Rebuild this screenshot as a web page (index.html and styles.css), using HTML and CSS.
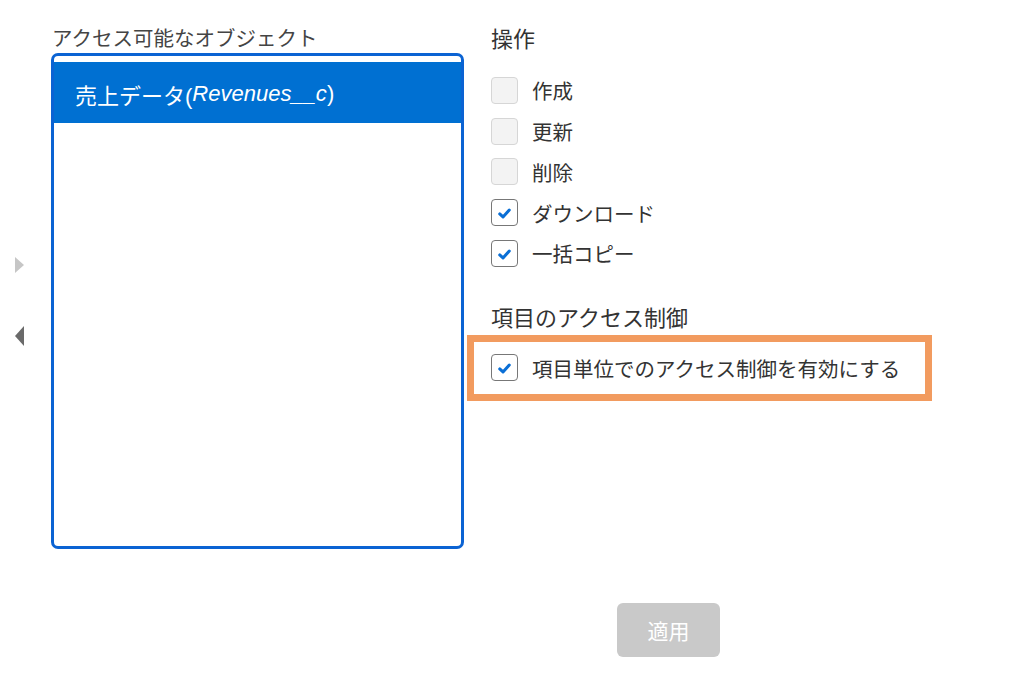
FILE: index.html
```html
<!DOCTYPE html>
<html lang="ja">
<head>
<meta charset="utf-8">
<link rel="stylesheet" href="styles.css">
</head>
<body>
<div class="page">
  <div class="main">
    <div class="left">
      <div class="list-label">アクセス可能なオブジェクト</div>
      <div class="arrows">
        <span class="arrow arrow-right"></span>
        <span class="arrow arrow-left"></span>
      </div>
      <div class="listbox">
        <div class="list-item selected">売上データ(<i>Revenues__c</i>)</div>
      </div>
    </div>
    <div class="right">
      <div class="heading">操作</div>
      <ul class="options">
        <li class="option"><span class="cb disabled"></span><span class="opt-label">作成</span></li>
        <li class="option"><span class="cb disabled"></span><span class="opt-label">更新</span></li>
        <li class="option"><span class="cb disabled"></span><span class="opt-label">削除</span></li>
        <li class="option"><span class="cb checked"><svg viewBox="0 0 12 10" width="13" height="11"><path d="M1.6 5.4 L4.6 8.2 L10.4 1.8" /></svg></span><span class="opt-label">ダウンロード</span></li>
        <li class="option"><span class="cb checked"><svg viewBox="0 0 12 10" width="13" height="11"><path d="M1.6 5.4 L4.6 8.2 L10.4 1.8" /></svg></span><span class="opt-label">一括コピー</span></li>
      </ul>
      <div class="heading heading-2">項目のアクセス制御</div>
      <div class="highlight">
        <div class="option"><span class="cb checked"><svg viewBox="0 0 12 10" width="13" height="11"><path d="M1.6 5.4 L4.6 8.2 L10.4 1.8" /></svg></span><span class="opt-label">項目単位でのアクセス制御を有効にする</span></div>
      </div>
    </div>
  </div>
  <div class="footer">
    <button class="apply" type="button">適用</button>
  </div>
</div>
</body>
</html>
```

FILE: styles.css
```css
html, body {
  margin: 0;
  padding: 0;
  background: #ffffff;
}

body {
  font-family: "Noto Sans CJK JP", "Noto Sans", sans-serif;
  color: #333333;
}

.page {
  display: flex;
  flex-direction: column;
  padding-top: 23px;
}

.main {
  display: flex;
  align-items: flex-start;
}

.left {
  display: grid;
  grid-template-columns: 51px 413px;
  grid-template-rows: auto auto;
}

.list-label {
  grid-column: 2;
  grid-row: 1;
  font-size: 20.5px;
  line-height: 28px;
  color: #444444;
  padding-left: 1px;
  margin-bottom: 2px;
}

.arrows {
  grid-column: 1;
  grid-row: 2;
  display: flex;
  flex-direction: column;
  justify-content: center;
  align-items: flex-start;
  padding-left: 15px;
  gap: 53px;
}

.arrow {
  display: block;
  width: 0;
  height: 0;
}

.arrow-right {
  border-top: 8.5px solid transparent;
  border-bottom: 8.5px solid transparent;
  border-left: 9px solid #c6c6c6;
}

.arrow-left {
  border-top: 10px solid transparent;
  border-bottom: 10px solid transparent;
  border-right: 9px solid #6a6a6a;
}

.listbox {
  grid-column: 2;
  grid-row: 2;
  box-sizing: border-box;
  height: 496px;
  border: 3px solid #0b63d3;
  border-radius: 7px;
  padding-top: 6px;
  background: #ffffff;
}

.list-item {
  height: 61px;
  display: flex;
  align-items: center;
  padding-left: 21px;
  padding-top: 3px;
  box-sizing: border-box;
  font-size: 22px;
  font-family: "Liberation Sans", "Noto Sans CJK JP", sans-serif;
  color: #ffffff;
}

.list-item i {
  font-style: italic;
}

.list-item.selected {
  background: #0070d2;
}

.right {
  margin-left: 27px;
  display: flex;
  flex-direction: column;
  align-items: flex-start;
}

.heading {
  font-size: 22px;
  line-height: 28px;
  color: #333333;
}

.options {
  list-style: none;
  margin: 19px 0 0 0;
  padding: 0;
}

.option {
  display: flex;
  align-items: center;
  height: 40.75px;
}

.cb {
  box-sizing: border-box;
  width: 27px;
  height: 27px;
  border-radius: 4px;
  display: flex;
  align-items: center;
  justify-content: center;
  flex: none;
}

.cb.disabled {
  background: #f3f3f3;
  border: 1.5px solid #d6d6d6;
}

.cb.checked {
  background: #ffffff;
  border: 1.5px solid #777777;
}

.cb svg {
  margin-top: 2px;
}

.cb svg path {
  fill: none;
  stroke: #0a6fd6;
  stroke-width: 2.8;
  stroke-linecap: round;
  stroke-linejoin: round;
}

.opt-label {
  margin-left: 14px;
  font-size: 20.5px;
  line-height: 28px;
  color: #333333;
}

.heading-2 {
  margin-top: 28px;
}

.highlight {
  margin-top: 5px;
  margin-left: -24px;
  box-sizing: border-box;
  width: 465px;
  height: 66px;
  border: 7px solid #f29b5f;
  padding-left: 17px;
  display: flex;
  align-items: center;
}

.footer {
  margin-top: 54px;
  padding-left: 617px;
}

.apply {
  box-sizing: border-box;
  width: 103px;
  height: 54px;
  border: none;
  border-radius: 6px;
  background: #c9c9c9;
  color: #ffffff;
  font-family: "Noto Sans CJK JP", sans-serif;
  font-size: 21px;
  padding: 0;
}
```
